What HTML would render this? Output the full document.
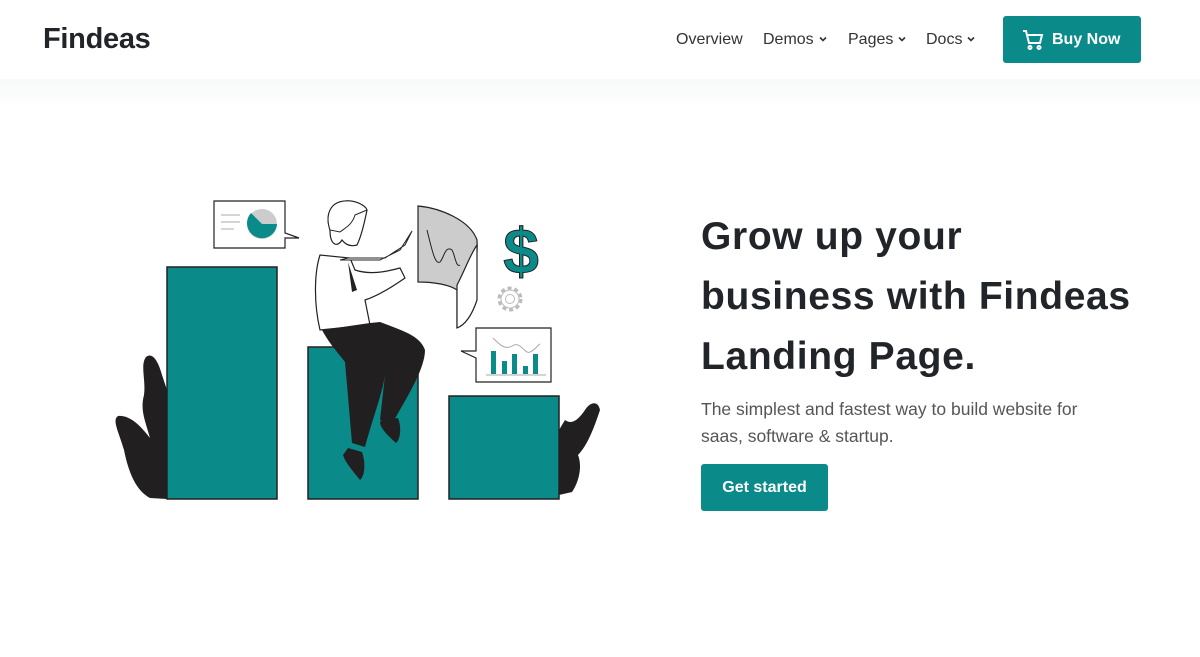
<!DOCTYPE html>
<html><head><meta charset="utf-8"><style>
*{margin:0;padding:0;box-sizing:border-box}
body{width:1200px;height:657px;background:#fff;font-family:"Liberation Sans",sans-serif;color:#212529;position:relative;overflow:hidden}
.hdr{position:absolute;left:0;top:0;width:1200px;height:79px;background:#fff}
.band{position:absolute;left:0;top:79px;width:1200px;height:30px;background:linear-gradient(#f8f9f9,#fff)}
.logo{position:absolute;left:43px;top:23px;font-size:29px;font-weight:bold;color:#212529;letter-spacing:-0.3px}
.nav{position:absolute;top:31px;font-size:16px;color:#333;white-space:nowrap}
.nav svg{margin-left:5px;vertical-align:2px}
.buy{position:absolute;left:1003px;top:16px;width:138px;height:47px;background:#0b8a8a;border-radius:3px;color:#fff;font-weight:bold;font-size:16px;line-height:47px;padding-left:49px}
h1{position:absolute;left:701px;top:207px;font-size:39px;line-height:60px;font-weight:bold;color:#212529;letter-spacing:0.65px}
p{position:absolute;left:701px;top:396px;font-size:17.5px;line-height:27px;color:#555}
.gs{position:absolute;left:701px;top:464px;width:127px;height:47px;background:#0b8a8a;border-radius:3px;color:#fff;font-weight:bold;font-size:16px;line-height:47px;text-align:center}
</style></head><body>
<div class="hdr"></div><div class="band"></div>
<div class="logo">Findeas</div>
<div class="nav" style="left:676px">Overview</div>
<div class="nav" style="left:763px">Demos<svg width="8" height="6" viewBox="0 0 8 6"><path d="M1 1.5l3 3 3-3" fill="none" stroke="#333" stroke-width="1.6"/></svg></div>
<div class="nav" style="left:848px">Pages<svg width="8" height="6" viewBox="0 0 8 6"><path d="M1 1.5l3 3 3-3" fill="none" stroke="#333" stroke-width="1.6"/></svg></div>
<div class="nav" style="left:926px">Docs<svg width="8" height="6" viewBox="0 0 8 6"><path d="M1 1.5l3 3 3-3" fill="none" stroke="#333" stroke-width="1.6"/></svg></div>
<div class="buy">Buy Now</div>
<svg style="position:absolute;left:1022px;top:29px" width="22" height="22" viewBox="0 0 22 22" fill="none" stroke="#fff" stroke-width="2"><path d="M1 2h3l3 12h11l2-8H6"/><circle cx="8" cy="18.5" r="1.5"/><circle cx="17" cy="18.5" r="1.5"/></svg>
<h1>Grow up your<br>business with Findeas<br>Landing Page.</h1>
<p>The simplest and fastest way to build website for<br>saas, software &amp; startup.</p>
<div class="gs">Get started</div>
<svg style="position:absolute;left:0;top:0" width="700" height="657" viewBox="0 0 700 657">
<g fill="#221f20">
<path d="M167 499 L150 498 C135 490 128 470 124 450 C118 430 112 420 118 416 C130 415 140 425 150 438 C145 420 140 410 144 395 C146 380 140 365 146 357 C152 352 158 360 162 375 L167 390 Z"/>
<path d="M559 495 L572 492 C580 480 582 465 578 455 C588 445 595 425 600 410 C598 400 590 402 585 410 C578 420 572 425 565 420 L559 430 Z"/>
</g>
<g fill="#0b8a8a" stroke="#222" stroke-width="1.5">
<rect x="167" y="267" width="110" height="232"/>
<rect x="308" y="347" width="110" height="152"/>
<rect x="449" y="396" width="110" height="103"/>
</g>
<path d="M214 201H285V233L299 238H285V248H214Z" fill="#fff" stroke="#222" stroke-width="1.2"/>
<g stroke="#bbb" stroke-width="1.2"><line x1="221" y1="215" x2="240" y2="215"/><line x1="221" y1="222" x2="240" y2="222"/><line x1="221" y1="229" x2="234" y2="229"/></g>
<circle cx="262" cy="224" r="15" fill="#ccc"/>
<path d="M262 224 L277 224 A15 15 0 1 1 251 213 Z" fill="#0b8a8a"/>
<path d="M476 328H551V382H476V358L461 351H476Z" fill="#fff" stroke="#222" stroke-width="1.2"/>
<g fill="#0b8a8a"><rect x="491" y="351" width="5" height="23"/><rect x="502" y="361" width="5" height="13"/><rect x="512" y="354" width="5" height="20"/><rect x="523" y="366" width="5" height="8"/><rect x="533" y="354" width="5" height="20"/></g>
<line x1="486" y1="375" x2="546" y2="375" stroke="#aaa"/>
<path d="M493 338 C500 345 505 350 512 346 C520 340 525 355 530 352 C535 350 538 345 540 344" fill="none" stroke="#aaa"/>
<text x="521" y="273" font-family="Liberation Sans" font-weight="bold" font-size="64" fill="#0b8a8a" stroke="#222" stroke-width="1" text-anchor="middle">$</text>
<circle cx="510" cy="299" r="11" fill="none" stroke="#bbb" stroke-width="3" stroke-dasharray="4 3"/>
<circle cx="510" cy="299" r="9" fill="#fff" stroke="#bbb"/>
<circle cx="510" cy="299" r="4.5" fill="none" stroke="#bbb"/>
<path d="M418 206 C440 208 470 220 477 240 C478 260 472 300 457 328 L457 290 C450 285 435 282 418 282 Z" fill="#ccc" stroke="#222" stroke-width="1.2"/>
<path d="M457 285 C465 270 470 255 477 245 L477 300 C472 315 465 325 457 328Z" fill="#fff" stroke="#222" stroke-width="1.2"/>
<path d="M427 230 C432 250 435 265 440 262 C444 258 445 245 452 250 C455 255 456 268 460 265" fill="none" stroke="#222"/>
<path d="M320 255 C315 270 313 300 320 330 L370 325 L365 300 C380 295 395 285 405 278 L400 268 C385 272 370 275 355 270 L350 258 Z" fill="#fff" stroke="#222" stroke-width="1.2"/>
<path d="M340 260 L380 260 L400 250 L412 231 L405 245 L385 258 L348 258Z" fill="#fff" stroke="#222"/>
<path d="M348 262 L357 290 L352 292 Z" fill="#222"/>
<path d="M322 330 C330 345 340 355 345 362 L352 443 L365 447 C372 420 382 395 385 375 L380 420 L392 424 C405 400 425 370 425 350 C420 335 400 330 380 322 L370 323Z" fill="#221f20"/>
<path d="M348 448 L362 452 C365 460 366 475 360 480 C352 470 345 462 343 455Z" fill="#221f20"/>
<path d="M382 420 L398 418 C402 428 400 440 396 443 C388 436 380 428 380 422Z" fill="#221f20"/>
<path d="M330 230 C325 215 330 202 345 201 C355 200 365 205 367 210 C365 220 362 235 357 245 C350 247 345 244 342 240 C337 248 330 245 330 230Z" fill="#fff" stroke="#222" stroke-width="1.2"/>
<path d="M330 230 C325 215 330 202 345 201 C355 200 365 205 367 210 L355 215 C352 225 345 228 340 232 Z" fill="#fff" stroke="#222"/>
</svg>
</body></html>
